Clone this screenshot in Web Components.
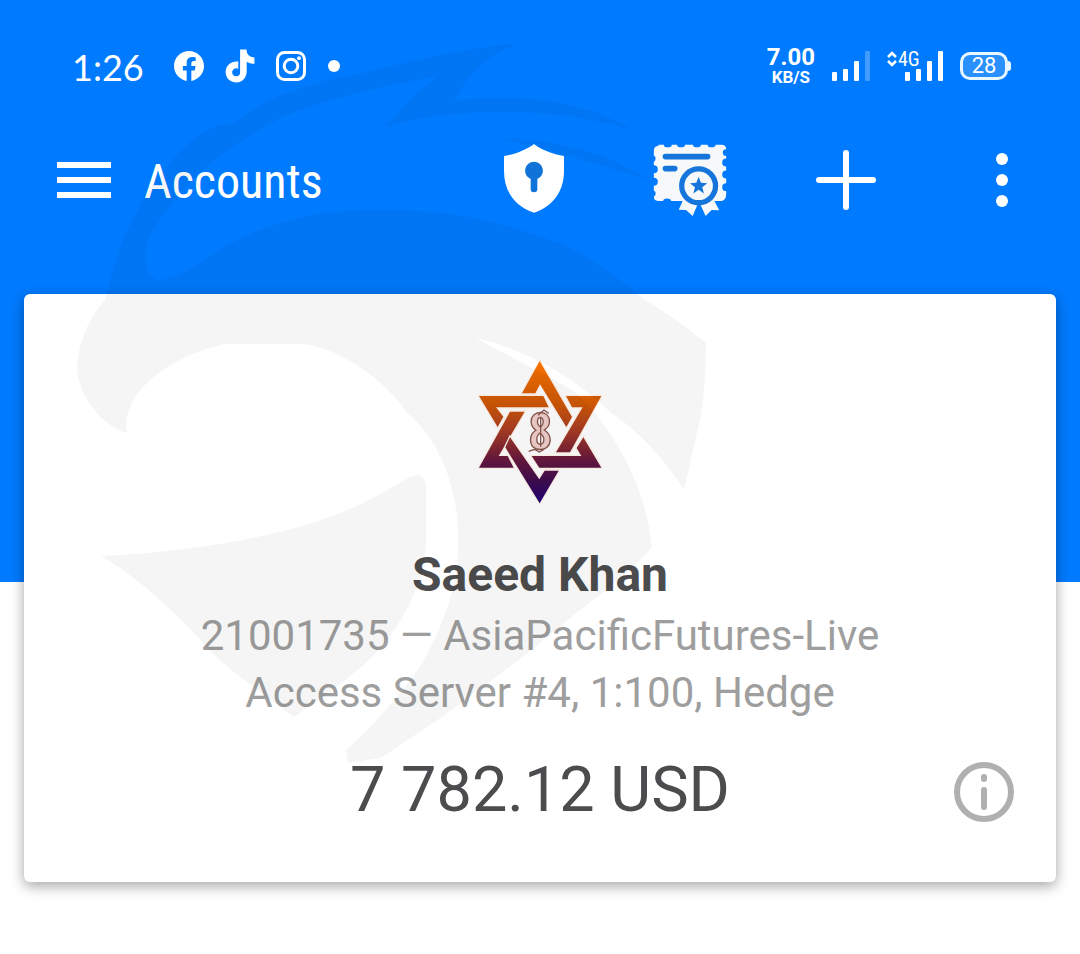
<!DOCTYPE html>
<html lang="en">
<head>
<meta charset="utf-8">
<meta name="viewport" content="width=device-width, initial-scale=1">
<title>Accounts</title>
<style>
  body {
    margin: 0;
    background: #fff;
    font-family: Roboto, "Liberation Sans", sans-serif;
  }
</style>
</head>
<body>
<accounts-page>
  <status-bar slot="status" time="1:26" speed="7.00" unit="KB/S" battery="28"></status-bar>
  <app-toolbar slot="toolbar">Accounts</app-toolbar>
  <account-card>
    <span slot="name">Saeed Khan</span>
    <span slot="server">21001735 — AsiaPacificFutures-Live</span>
    <span slot="details">Access Server #4, 1:100, Hedge</span>
    <span slot="balance">7 782.12 USD</span>
  </account-card>
</accounts-page>

<script>
const ICONS = {
  facebook: {
    box: "0 0 24 24", w: 30, h: 30,
    body: `<path d="M24 12.073c0-6.627-5.373-12-12-12s-12 5.373-12 12c0 5.99 4.388 10.954 10.125 11.854v-8.385H7.078v-3.47h3.047V9.43c0-3.007 1.792-4.669 4.533-4.669 1.312 0 2.686.235 2.686.235v2.953H15.83c-1.491 0-1.956.925-1.956 1.874v2.25h3.328l-.532 3.47h-2.796v8.385C19.612 23.027 24 18.062 24 12.073z" fill="currentColor"/>`,
  },
  tiktok: {
    box: "1.5 0 21 24", w: 28, h: 32,
    body: `<path d="M12.525.02c1.31-.02 2.61-.01 3.91-.02.08 1.53.63 3.09 1.75 4.17 1.12 1.11 2.7 1.62 4.24 1.79v4.03c-1.44-.05-2.89-.35-4.2-.97-.57-.26-1.1-.59-1.62-.93-.01 2.92.01 5.84-.02 8.75-.08 1.4-.54 2.79-1.35 3.94-1.31 1.92-3.58 3.17-5.91 3.21-1.43.08-2.86-.31-4.08-1.03-2.02-1.19-3.44-3.37-3.65-5.71-.02-.5-.03-1-.01-1.49.18-1.9 1.12-3.72 2.58-4.96 1.66-1.44 3.98-2.13 6.15-1.72.02 1.48-.04 2.96-.04 4.44-.99-.32-2.15-.23-3.02.37-.63.41-1.11 1.04-1.36 1.75-.21.51-.15 1.07-.14 1.61.24 1.64 1.82 3.02 3.5 2.87 1.12-.01 2.19-.66 2.77-1.61.19-.33.4-.67.41-1.06.1-1.79.06-3.57.07-5.36.01-4.03-.01-8.05.02-12.07z" fill="currentColor" stroke="currentColor" stroke-width=".8"/>`,
  },
  instagram: {
    box: "0 0 30 30", w: 30, h: 30,
    body: `<g fill="none" stroke="currentColor" stroke-width="3">
        <rect x="1.5" y="1.5" width="27" height="27" rx="7"/>
        <circle cx="15" cy="15" r="6.8"/>
      </g>
      <circle cx="23" cy="7.2" r="1.9" fill="currentColor"/>`,
  },
  more: {
    box: "0 0 12 12", w: 12, h: 12,
    body: `<circle cx="6" cy="6" r="6" fill="currentColor"/>`,
  },
  signal: {
    box: "0 0 38 31", w: 38, h: 31,
    body: `<g fill="currentColor">
        <rect y="21" width="5" height="9" rx="1"/>
        <rect x="11" y="18" width="5" height="12" rx="1"/>
        <rect x="22" y="10" width="5" height="20" rx="1"/>
        <rect x="33" width="5" height="30" rx="1" opacity=".25"/>
      </g>`,
  },
  signal4g: {
    box: "0 0 56 31", w: 56, h: 31,
    body: `<path d="M1 6l4-4 4 4M1 10l4 4 4-4" fill="none" stroke="currentColor" stroke-width="2.6"/>
      <text x="11" y="15" font-size="20" font-family="Roboto Condensed, Roboto, sans-serif" fill="currentColor">4G</text>
      <g fill="currentColor">
        <rect x="18" y="21" width="5" height="9" rx="1"/>
        <rect x="29" y="18" width="5" height="12" rx="1"/>
        <rect x="40" y="10" width="5" height="20" rx="1"/>
        <rect x="51" width="5" height="30" rx="1"/>
      </g>`,
  },
  menu: {
    box: "0 0 54 36", w: 54, h: 36,
    body: `<path d="M0 3h54M0 18h54M0 33h54" stroke="currentColor" stroke-width="6"/>`,
  },
  shield: {
    box: "72 42 180 216", w: 60, h: 72,
    body: `<path d="M162 42C186 60 218 73 252 78V122C252 184 220 228 162 248C104 228 72 184 72 122V78C106 73 138 60 162 42Z" fill="currentColor"/>
      <path d="M162 95a27 27 0 0 1 10 52v30a10 10 0 0 1-20 0v-30a27 27 0 0 1 10-52z" fill="#1173d8"/>`,
  },
  certificate: {
    box: "520 40 222 220", w: 74, h: 73,
    body: `<path fill="#f6f8fa" d="M536 42h16a12 8 0 0 0 24 0h16a12 8 0 0 0 24 0h24a12 8 0 0 0 24 0h20a12 8 0 0 0 24 0h18q14 0 14 14a10 10 0 0 0 0 20v8a12 12 0 0 0 0 24v12a12 12 0 0 0 0 24v14a12 12 0 0 0 0 24v10q0 20-18 20h-148a12 8 0 0 0-24 0h-12q-16 0-16-14a10 10 0 0 0 0-18v-14a12 12 0 0 0 0-24v-14a12 12 0 0 0 0-24v-10a12 12 0 0 0 0-20v-12q0-16 14-16z"/>
      <path d="M557 78h127M557 114h28" stroke="#1675db" stroke-width="17" stroke-linecap="round"/>
      <path fill="#f6f8fa" d="M612 205l-15 33 22 1 20 18 16-38v-18zM701 205l18 35-23-1-18 18-17-38v-18z"/>
      <circle cx="657" cy="166" r="59" fill="#1675db"/>
      <circle cx="657" cy="166" r="43" fill="#f6f8fa"/>
      <path fill="#1675db" d="M657 139l7 18 19 1-15 12 5 19-16-11-16 11 5-19-15-12 19-1z"/>`,
  },
  plus: {
    box: "0 0 60 60", w: 60, h: 60,
    body: `<path d="M30 3v54M3 30h54" stroke="currentColor" stroke-width="6" stroke-linecap="round"/>`,
  },
  overflow: {
    box: "0 0 12 54", w: 12, h: 54,
    body: `<g fill="currentColor"><circle cx="6" cy="6" r="6"/><circle cx="6" cy="27" r="6"/><circle cx="6" cy="48" r="6"/></g>`,
  },
  info: {
    box: "0 0 60 60", w: 60, h: 60,
    body: `<circle cx="30" cy="30" r="27" fill="none" stroke="currentColor" stroke-width="6"/>
      <path d="M30 15v2M30 28v17" stroke="currentColor" stroke-width="6" stroke-linecap="round"/>`,
  },
};

class AppIcon extends HTMLElement {
  connectedCallback() {
    const icon = ICONS[this.getAttribute("name")];
    this.attachShadow({ mode: "open" }).innerHTML = `
      <style>
        :host { display: block; flex: none; }
        svg { display: block; overflow: visible; }
      </style>
      <svg viewBox="${icon.box}" width="${icon.w}" height="${icon.h}" aria-hidden="true">${icon.body}</svg>
    `;
  }
}

class StatusBar extends HTMLElement {
  connectedCallback() {
    this.attachShadow({ mode: "open" }).innerHTML = `
      <style>
        :host {
          display: flex;
          align-items: center;
          justify-content: space-between;
          height: 108px;
          padding: 24px 72px 0;
          color: #fff;
          box-sizing: border-box;
        }
        .group {
          display: flex;
          align-items: center;
        }
        .left { gap: 22px; }
        .right { gap: 17px; }
        .time {
          margin-right: 8px;
          padding-top: 2px;
          font: 36px/40px Lato, sans-serif;
        }
        .speed {
          display: flex;
          flex-direction: column;
          align-items: center;
          font-weight: 700;
          font-size: 24px;
          line-height: 22px;
        }
        .speed small {
          font-size: 17px;
          line-height: 18px;
        }
        .battery {
          position: relative;
          width: 48px;
          height: 28px;
          box-sizing: border-box;
          border: 3px solid #e9f8ff;
          border-radius: 10px;
          background: #2b90ff;
          font-size: 22px;
          line-height: 22px;
          text-align: center;
        }
        .battery::after {
          content: "";
          position: absolute;
          top: 6px;
          right: -6px;
          width: 3px;
          height: 10px;
          border-radius: 0 3px 3px 0;
          background: #e9f8ff;
        }
      </style>
      <div class="group left">
        <span class="time">${this.getAttribute("time")}</span>
        <app-icon name="facebook"></app-icon>
        <app-icon name="tiktok"></app-icon>
        <app-icon name="instagram"></app-icon>
        <app-icon name="more"></app-icon>
      </div>
      <div class="group right">
        <div class="speed">${this.getAttribute("speed")}<small>${this.getAttribute("unit")}</small></div>
        <app-icon name="signal"></app-icon>
        <app-icon name="signal4g"></app-icon>
        <div class="battery">${this.getAttribute("battery")}</div>
      </div>
    `;
  }
}

class AppToolbar extends HTMLElement {
  connectedCallback() {
    this.attachShadow({ mode: "open" }).innerHTML = `
      <style>
        :host {
          display: flex;
          align-items: center;
          height: 144px;
          color: #fff;
        }
        button {
          display: grid;
          place-items: center;
          height: 96px;
          margin: 0;
          padding: 0;
          border: 0;
          background: none;
          color: inherit;
          cursor: pointer;
        }
        .menu { padding: 0 33px 0 57px; }
        h1 {
          flex: 1;
          margin: 0;
          padding-top: 4px;
          font: 400 48px/60px "Roboto Condensed", Roboto, sans-serif;
        }
        nav { display: flex; }
        nav button { width: 156px; }
      </style>
      <button class="menu" aria-label="Menu"><app-icon name="menu"></app-icon></button>
      <h1><slot></slot></h1>
      <nav>
        <button aria-label="Security"><app-icon name="shield"></app-icon></button>
        <button aria-label="Certificates"><app-icon name="certificate"></app-icon></button>
        <button aria-label="Add account"><app-icon name="plus"></app-icon></button>
        <button aria-label="More options"><app-icon name="overflow"></app-icon></button>
      </nav>
    `;
  }
}

class BrokerLogo extends HTMLElement {
  connectedCallback() {
    this.attachShadow({ mode: "open" }).innerHTML = `
      <style>
        :host { display: block; }
        svg { display: block; }
      </style>
      <svg viewBox="54 30 372 432" width="124" height="144" aria-hidden="true">
        <defs>
          <linearGradient id="fade" gradientUnits="userSpaceOnUse" x1="0" y1="33" x2="0" y2="460">
            <stop offset="0" stop-color="#fa7200"/>
            <stop offset=".3" stop-color="#cf5806"/>
            <stop offset=".5" stop-color="#a53a26"/>
            <stop offset=".7" stop-color="#65183f"/>
            <stop offset=".85" stop-color="#3d0c50"/>
            <stop offset="1" stop-color="#22007a"/>
          </linearGradient>
        </defs>
        <g fill="url(#fade)" stroke="#fff3ea" stroke-width="8" paint-order="stroke">
          <path d="M239 33L336 201L319 231L240 103L226 130H186Z"/>
          <path d="M57 138H250L266 172H108L130 200L113 231Z"/>
          <path d="M318 138H424L330 307H288L368 172H336Z"/>
          <path d="M150 185H194L116 318H143L161 353H57Z"/>
          <path d="M370 262L424 353H238L215 318H364L350 294Z"/>
          <path d="M150 262L238 388L254 362H296L239 460L136 292Z"/>
        </g>
        <text x="241" y="298" text-anchor="middle" font-family="Open Sans Condensed, Roboto Condensed, sans-serif" font-weight="700"
          font-size="150" fill="#f0cfca" stroke="#8a5750" stroke-width="4">8</text>
        <path d="M242 200v90M234 196l18-16 14 10M206 304l18-6 14 8 14-8" fill="none" stroke="#8a5750" stroke-width="4"/>
      </svg>
    `;
  }
}

class AccountCard extends HTMLElement {
  connectedCallback() {
    this.attachShadow({ mode: "open" }).innerHTML = `
      <style>
        :host {
          display: flex;
          flex-direction: column;
          align-items: center;
          padding: 66px 42px 52px;
          border-radius: 6px;
          background: #fff;
          box-shadow: 0 4px 14px rgba(0, 0, 0, .36);
          color: #4c4c4e;
          text-align: center;
        }
        h2 {
          margin: 43px 0 4px;
          font-size: 48px;
          line-height: 56px;
          font-weight: 700;
        }
        p {
          margin: 0;
          color: #9e9e9e;
          font-size: 42px;
          line-height: 57px;
        }
        footer {
          display: grid;
          grid-template-columns: 1fr auto 1fr;
          align-items: center;
          align-self: stretch;
          margin-top: 33px;
        }
        output {
          grid-column: 2;
          margin-top: -4px;
          font-size: 63px;
          line-height: 80px;
        }
        button {
          justify-self: end;
          padding: 0;
          border: 0;
          background: none;
          color: #b0b0b0;
          cursor: pointer;
        }
      </style>
      <broker-logo></broker-logo>
      <h2><slot name="name"></slot></h2>
      <p><slot name="server"></slot></p>
      <p><slot name="details"></slot></p>
      <footer>
        <output><slot name="balance"></slot></output>
        <button aria-label="Account info"><app-icon name="info"></app-icon></button>
      </footer>
    `;
  }
}

class BrandWatermark extends HTMLElement {
  connectedCallback() {
    this.attachShadow({ mode: "open" }).innerHTML = `
      <style>
        :host {
          display: block;
          pointer-events: none;
        }
        svg { display: block; }
      </style>
      <svg viewBox="76 40 632 724" width="632" height="724" aria-hidden="true">
        <g fill="#000" fill-opacity=".04">
          <path d="M105 300C112 270 118 245 138 210C155 180 190 125 233 123C270 95 310 82 363 73C400 64 450 50 520 43C490 55 470 70 455 100C530 92 590 103 632 130C560 108 460 105 385 127C405 105 420 88 437 77C370 87 310 105 277 120C225 150 190 170 149 237C141 262 148 280 160 280C185 276 200 262 215 252C260 225 310 210 363 210C440 207 500 220 559 243C600 260 625 285 645 300C667 313 690 330 706 343C706 380 703 410 697 433L684 490C665 460 640 432 611 413C580 382 530 350 476 338C520 362 560 382 575 392C610 425 645 480 652 547C630 575 590 600 528 653L442 717L381 758L348 763L346 750C370 730 405 690 424 660C440 630 458 590 458 547C460 490 440 440 407 413C385 380 340 348 303 344H225C185 352 120 385 127 433C98 425 77 390 77 367C78 345 88 318 105 300Z"/>
          <path d="M101 556C190 552 300 535 363 503C390 490 405 478 416 475Q426 474 426 490V547C422 590 400 625 381 647C360 672 325 695 294 717C270 700 240 678 216 657C190 628 150 585 101 556Z"/>
          <path d="M500 138C560 140 605 152 650 180C600 165 550 150 500 138Z"/>
        </g>
      </svg>
    `;
  }
}

class AccountsPage extends HTMLElement {
  connectedCallback() {
    this.attachShadow({ mode: "open" }).innerHTML = `
      <style>
        :host {
          display: block;
          position: relative;
          padding-bottom: 72px;
          background: linear-gradient(#007bff, #007bff) top / 100% 582px no-repeat;
        }
        main { padding: 42px 24px 0; }
        /* decoration lying over the header and the card */
        brand-watermark {
          position: absolute;
          top: 40px;
          left: 76px;
        }
      </style>
      <header>
        <slot name="status"></slot>
        <slot name="toolbar"></slot>
      </header>
      <main><slot></slot></main>
      <brand-watermark></brand-watermark>
    `;
  }
}

customElements.define("app-icon", AppIcon);
customElements.define("status-bar", StatusBar);
customElements.define("app-toolbar", AppToolbar);
customElements.define("broker-logo", BrokerLogo);
customElements.define("account-card", AccountCard);
customElements.define("brand-watermark", BrandWatermark);
customElements.define("accounts-page", AccountsPage);
</script>
</body>
</html>
